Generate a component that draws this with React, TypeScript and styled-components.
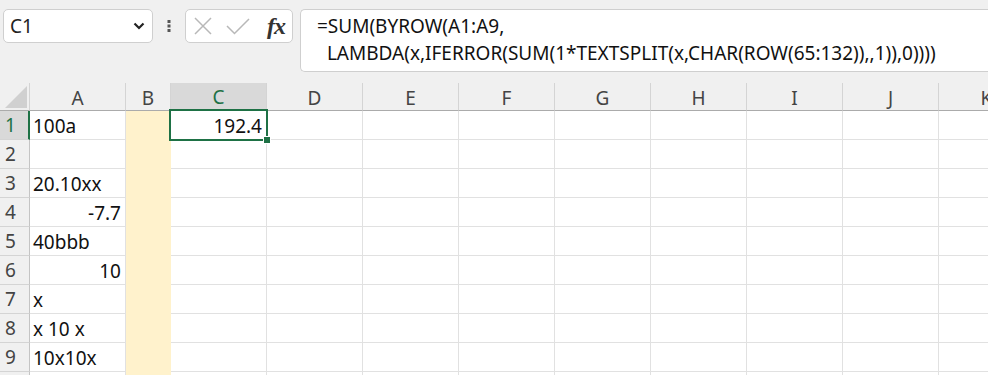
import { Fragment } from 'react';
import styled, { createGlobalStyle } from 'styled-components';

const GlobalStyle = createGlobalStyle`
	body {
		margin: 0;
		background: #fff;
		font-family: 'Noto Sans', 'Liberation Sans', sans-serif;
		overflow: hidden;
	}
`;

const Page = styled.div`
	width: 988px;
	height: 375px;
	overflow: hidden;
	background: #fff;
`;

const Toolbar = styled.div`
	height: 83px;
	box-sizing: border-box;
	padding: 9px 0 0 3px;
	display: flex;
	align-items: flex-start;
	background: #f0f0f0;
`;

const NameBox = styled.div`
	width: 150px;
	height: 34px;
	box-sizing: border-box;
	border: 1px solid #cfcfcf;
	border-radius: 5px;
	background: #fff;
	display: flex;
	align-items: center;
	justify-content: space-between;
	padding: 0 7px 0 6px;
	font-size: 19px;
	color: #222;
`;

const DotsWrap = styled.div`
	width: 32px;
	height: 34px;
	display: flex;
	align-items: center;
	justify-content: center;
`;

const FxBox = styled.div`
	width: 108px;
	height: 34px;
	box-sizing: border-box;
	border: 1px solid #cfcfcf;
	border-radius: 5px;
	background: #fff;
	display: flex;
	align-items: center;
	padding: 0 7px 0 8px;
	gap: 14px;
`;

const FxText = styled.span`
	font-family: 'Liberation Serif', serif;
	font-style: italic;
	font-weight: bold;
	font-size: 24px;
	color: #333;
	margin-left: auto;
	letter-spacing: -1px;
`;

const FormulaBox = styled.div`
	flex: 1;
	margin-left: 7px;
	height: 63px;
	box-sizing: border-box;
	border: 1px solid #cfcfcf;
	border-right: none;
	border-radius: 5px 0 0 5px;
	background: #fff;
	padding: 3px 0 0 16px;
	font-size: 19px;
	line-height: 27px;
	color: #111;
	white-space: pre;
`;

const Sheet = styled.div`
	display: grid;
	grid-template-columns: 30px 96px 45px repeat(9, 96px);
	grid-auto-rows: 29px;
	grid-template-rows: 28px;
	font-size: 19px;
`;

const Corner = styled.div`
	background: #f0f0f0;
	border-right: 1px solid #d4d4d4;
	border-bottom: 1px solid #ababab;
	display: flex;
	align-items: flex-end;
	justify-content: flex-end;
	padding: 0 2px 2px 0;
`;

const ColHead = styled.div<{ $active?: boolean }>`
	background: ${(p) => (p.$active ? '#d9d9d9' : '#f0f0f0')};
	color: ${(p) => (p.$active ? '#1e7145' : '#444')};
	border-right: 1px solid #d4d4d4;
	border-bottom: ${(p) => (p.$active ? '2px solid #1e7145' : '1px solid #ababab')};
	display: flex;
	align-items: center;
	justify-content: center;
	padding-top: 2px;
`;

const RowHead = styled.div<{ $active?: boolean }>`
	background: ${(p) => (p.$active ? '#d9d9d9' : '#f0f0f0')};
	color: ${(p) => (p.$active ? '#1e7145' : '#444')};
	border-right: ${(p) => (p.$active ? '2px solid #1e7145' : '1px solid #c4c4c4')};
	border-bottom: 1px solid #d4d4d4;
	display: flex;
	align-items: center;
	padding-left: 5px;
`;

const Cell = styled.div<{ $right?: boolean; $fill?: boolean; $selected?: boolean }>`
	position: relative;
	z-index: ${(p) => (p.$selected ? 2 : 'auto')};
	background: ${(p) => (p.$fill ? '#fff2cc' : '#fff')};
	border-right: 1px solid ${(p) => (p.$fill ? '#fff2cc' : '#e1e1e1')};
	border-bottom: 1px solid ${(p) => (p.$fill ? '#fff2cc' : '#e1e1e1')};
	display: flex;
	align-items: center;
	justify-content: ${(p) => (p.$right ? 'flex-end' : 'flex-start')};
	padding: 1px 4px 0 3px;
	color: #111;
	white-space: nowrap;
`;

const Selection = styled.div`
	position: absolute;
	top: -2px;
	left: -2px;
	right: -2px;
	bottom: -2px;
	border: 2px solid #1e7145;
	pointer-events: none;
`;

const Handle = styled.div`
	position: absolute;
	right: -5px;
	bottom: -5px;
	width: 6px;
	height: 6px;
	background: #1e7145;
	border: 1px solid #fff;
`;

const columns = ['A', 'B', 'C', 'D', 'E', 'F', 'G', 'H', 'I', 'J', 'K'];

const colA: Record<number, { v: string; right?: boolean }> = {
	1: { v: '100a' },
	3: { v: '20.10xx' },
	4: { v: '-7.7', right: true },
	5: { v: '40bbb' },
	6: { v: '10', right: true },
	7: { v: 'x' },
	8: { v: 'x 10 x' },
	9: { v: '10x10x' },
};

const rows = [1, 2, 3, 4, 5, 6, 7, 8, 9, 10];

export default function App() {
	return (
		<>
			<GlobalStyle />
			<Page>
				<Toolbar>
					<NameBox>
						<span>C1</span>
						<svg width="12" height="8" viewBox="0 0 12 8">
							<path d="M1.5 1.5 L6 6 L10.5 1.5" fill="none" stroke="#222" strokeWidth="2.2" />
						</svg>
					</NameBox>
					<DotsWrap>
						<svg width="4" height="12" viewBox="0 0 4 12">
							<rect x="0.5" y="0" width="3" height="3" fill="#555" />
							<rect x="0.5" y="4.5" width="3" height="3" fill="#555" />
							<rect x="0.5" y="9" width="3" height="3" fill="#555" />
						</svg>
					</DotsWrap>
					<FxBox>
						<svg width="18" height="18" viewBox="0 0 18 18">
							<path d="M1 1 L17 17 M17 1 L1 17" stroke="#b8b8b8" strokeWidth="1.5" />
						</svg>
						<svg width="24" height="17" viewBox="0 0 24 17">
							<path d="M1 8 L8.5 15.5 L23 1" fill="none" stroke="#b8b8b8" strokeWidth="1.5" />
						</svg>
						<FxText>fx</FxText>
					</FxBox>
					<FormulaBox>
						{'=SUM(BYROW(A1:A9,\n  LAMBDA(x,IFERROR(SUM(1*TEXTSPLIT(x,CHAR(ROW(65:132)),,1)),0))))'}
					</FormulaBox>
				</Toolbar>
				<Sheet>
					<Corner>
						<svg width="22" height="22" viewBox="0 0 22 22">
							<polygon points="22,0 22,22 0,22" fill="#d0d0d0" />
						</svg>
					</Corner>
					{columns.map((c) => (
						<ColHead key={c} $active={c === 'C'}>
							{c}
						</ColHead>
					))}
					{rows.map((r) => (
						<Fragment key={r}>
							<RowHead $active={r === 1}>{r}</RowHead>
							{columns.map((c) => {
								const a = c === 'A' ? colA[r] : undefined;
								const isC1 = c === 'C' && r === 1;
								return (
									<Cell
										key={`${c}${r}`}
										$fill={c === 'B'}
										$right={a?.right || isC1}
										$selected={isC1}
									>
										{a?.v}
										{isC1 && '192.4'}
										{isC1 && (
											<Selection>
												<Handle />
											</Selection>
										)}
									</Cell>
								);
							})}
						</Fragment>
					))}
				</Sheet>
			</Page>
		</>
	);
}
